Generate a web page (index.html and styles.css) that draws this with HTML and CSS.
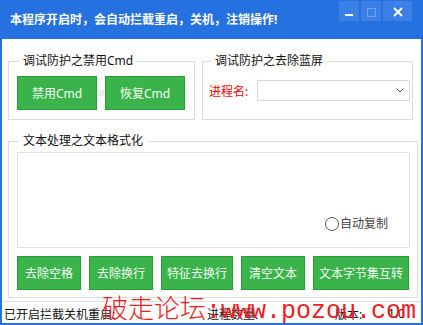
FILE: index.html
```html
<!DOCTYPE html>
<html lang="zh-CN">
<head>
    <meta charset="UTF-8">
    <title>拦截重启关机</title>
    <link rel="stylesheet" href="styles.css">
</head>
<body>
    <div class="window">
        <div class="titlebar">
            <span class="title">本程序开启时，会自动拦截重启，关机，注销操作!</span>
            <div class="controls">
                <div class="ctl min"><span class="bar"></span></div>
                <div class="ctl max"><span class="box"></span></div>
                <div class="ctl close">
                    <svg width="10" height="10" viewBox="0 0 10 10"><path d="M1 1L9 9M9 1L1 9" stroke="#fff" stroke-width="2"/></svg>
                </div>
            </div>
        </div>

        <div class="client">
            <div class="top-row">
                <fieldset class="group cmd">
                    <legend>调试防护之禁用Cmd</legend>
                    <div class="btn-pair">
                        <button class="btn wide">禁用Cmd</button>
                        <span class="knob"></span>
                        <button class="btn wide">恢复Cmd</button>
                    </div>
                </fieldset>

                <fieldset class="group bsod">
                    <legend>调试防护之去除蓝屏</legend>
                    <div class="proc-row">
                        <span class="proc-label">进程名:</span>
                        <div class="combo">
                            <svg width="8" height="5" viewBox="0 0 8 5"><path d="M0.5 0.5L4 4L7.5 0.5" fill="none" stroke="#555" stroke-width="1"/></svg>
                        </div>
                    </div>
                </fieldset>
            </div>

            <fieldset class="group text">
                <legend>文本处理之文本格式化</legend>
                <div class="textbox">
                    <label class="radio"><span class="dot"></span>自动复制</label>
                </div>
                <div class="btn-row">
                    <button class="btn w64">去除空格</button>
                    <button class="btn w64">去除换行</button>
                    <button class="btn w72">特征去换行</button>
                    <button class="btn w64">清空文本</button>
                    <button class="btn w96">文本字节集互转</button>
                </div>
            </fieldset>

            <div class="statusbar">
                <span class="panel p1">已开启拦截关机重启:</span>
                <span class="panel p2">进程数量:</span>
                <span class="panel p3">版本:</span>
                <span class="panel">1.0</span>
            </div>
        </div>

        <div class="watermark"><span class="cn">破走论坛</span><span class="en">:www.pozou.com</span></div>
    </div>
</body>
</html>
```

FILE: styles.css
```css
* {
    margin: 0;
    padding: 0;
    box-sizing: border-box;
}

body {
    background: #fff;
    font-family: "Noto Sans", "Noto Sans CJK SC", sans-serif;
    font-size: 12px;
    color: #111;
}

.window {
    position: relative;
    width: 423px;
    height: 325px;
    background: #fff;
    overflow: hidden;
}

/* 标题栏 */
.titlebar {
    height: 39px;
    background: #2671e0;
    display: flex;
    justify-content: space-between;
}

.title {
    align-self: center;
    margin-left: 10px;
    color: #fff;
    font-weight: bold;
    font-size: 12px;
    line-height: 16px;
}

.controls {
    display: flex;
    gap: 2px;
    margin-top: 1px;
    margin-right: 11px;
    height: 20px;
}

.ctl {
    width: 20px;
    height: 20px;
    background: #3a80e6;
    display: flex;
    align-items: center;
    justify-content: center;
}

.ctl.close {
    width: 29px;
}

.ctl .bar {
    width: 8px;
    height: 2px;
    background: #fff;
    margin-top: 8px;
}

.ctl .box {
    width: 9px;
    height: 9px;
    border: 1px solid #6ea2f0;
    margin-top: 2px;
}

.ctl svg {
    margin-top: 2px;
}

/* 客户区 */
.client {
    height: 286px;
    border: 2px solid #2671e0;
    border-top: 0;
    padding: 14px 4px 0 6px;
    display: flex;
    flex-direction: column;
}

.top-row {
    display: flex;
    gap: 7px;
}

.group {
    border: 1px solid #dcdcdc;
    min-width: 0;
}

.group legend {
    margin-left: 2px;
    padding: 0 4px;
    line-height: 16px;
    font-size: 12px;
    color: #111;
}

.group.cmd {
    width: 187px;
    padding: 7px 8px 9px 8px;
}

.group.bsod {
    width: 211px;
    padding: 11px 2px 18px 6px;
}

.group.text {
    width: 410px;
    margin-top: 13px;
    padding: 3px 7px 7px 8px;
}

.btn-pair {
    display: flex;
    align-items: center;
}

.knob {
    width: 6px;
    height: 6px;
    margin: 0 1px;
    background: #ececec;
}

.btn {
    height: 34px;
    background: #3bb34b;
    border: 1px solid #2b9f3a;
    color: #f4fff4;
    font-family: "Noto Sans", "Noto Sans CJK SC", sans-serif;
    font-size: 12px;
    cursor: pointer;
}

.btn.wide { width: 80px; }
.btn.w64 { width: 64px; }
.btn.w72 { width: 72px; }
.btn.w96 { width: 96px; }

.proc-row {
    display: flex;
    align-items: center;
    justify-content: space-between;
}

.proc-label {
    color: #f00;
    font-size: 12px;
}

.combo {
    width: 153px;
    height: 21px;
    border: 1px solid #d9d9d9;
    display: flex;
    align-items: center;
    justify-content: flex-end;
    padding-right: 5px;
}

.textbox {
    height: 96px;
    border: 1px solid #e2e2e2;
    display: flex;
    align-items: flex-end;
    justify-content: flex-end;
    padding: 0 21px 15px 0;
}

.radio {
    display: flex;
    align-items: center;
    gap: 1px;
    color: #444;
    font-size: 12px;
    line-height: 16px;
}

.radio .dot {
    width: 14px;
    height: 14px;
    border: 1.5px solid #555;
    border-radius: 50%;
    background: #fff;
}

.btn-row {
    display: flex;
    gap: 8px;
    margin-top: 8px;
}

/* 状态栏 */
.statusbar {
    margin: 3px -4px 0 -6px;
    border-top: 1px solid #e0e0e0;
    flex: 1;
    display: flex;
    align-items: center;
    padding: 2px 0 0 2px;
    font-size: 12px;
    color: #111;
}

.panel.p1 { width: 203px; }
.panel.p2 { width: 128px; }
.panel.p3 { width: 53px; }

/* 水印 */
.watermark {
    position: absolute;
    left: 102px;
    top: 287px;
    color: #ee1c24;
    white-space: nowrap;
    line-height: 40px;
}

.watermark .cn {
    font-family: "Noto Sans CJK SC", sans-serif;
    font-weight: 300;
    font-size: 26px;
}

.watermark .en {
    font-family: "Liberation Mono", monospace;
    font-size: 25px;
}
```
